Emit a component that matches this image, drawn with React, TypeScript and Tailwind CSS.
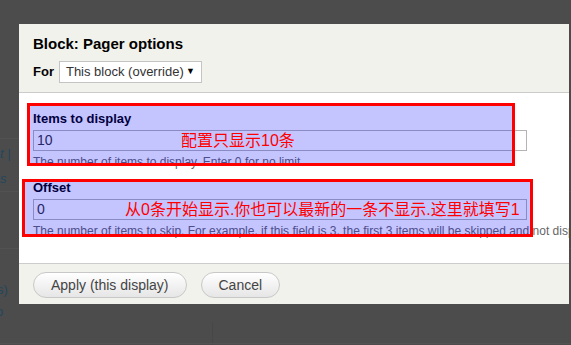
import React from 'react';

const cjk = "font-['Liberation_Sans','Noto_Sans_CJK_SC',sans-serif]";

interface FieldProps {
  label: string;
  value: string;
  note: string;
  hint: string;
  hintLeft: string;
  className?: string;
}

const Field: React.FC<FieldProps> = ({ label, value, note, hint, hintLeft, className }) => (
  <div className={className}>
    <div className="text-[13px] leading-[18px] font-bold text-black">{label}</div>
    <div className="relative mt-[2px]">
      <input
        readOnly
        value={value}
        className="block h-[21px] w-[494px] border border-[#b4b4b4] bg-white pl-[3px] text-[14px] text-[#333] outline-none"
      />
      {/* annotation */}
      <span
        className={`absolute inset-y-0 z-20 flex items-center text-[16px] leading-none text-[#ff0000] whitespace-nowrap ${cjk} ${hintLeft}`}
      >
        {hint}
      </span>
    </div>
    <div className="mt-[2px] text-[12px] leading-[18px] text-[#666] whitespace-nowrap">{note}</div>
  </div>
);

export default function App() {
  return (
    <div className="relative h-[345px] w-[571px] overflow-hidden bg-[#4c4c4c] font-['Liberation_Sans',Arial,sans-serif]">
      {/* page behind the modal */}
      <div className="text-[13px] text-[#24465c]">
        <div className="h-[139px] border-b border-[#525252]" />
        <div className="mt-[7px] leading-[16px] italic">t |</div>
        <div className="mt-[9px] leading-[16px] italic">s</div>
        <div className="mt-[4px] border-b border-[#525252]" />
        <div className="mt-[56px] border-b border-[#525252]" />
        <div className="ml-[-3px] mt-[33px] leading-[16px]">s)</div>
        <div className="ml-[-4px] mt-[6px] leading-[16px]">o</div>
        <div className="mt-[2px] flex h-[22px] border-b border-[#525252]">
          <div className="w-[213px] border-r border-[#474747]" />
        </div>
        <div className="flex">
          <div className="w-[213px] border-r border-[#474747] pl-[145px] pt-[5px]">
            <div className="flex h-[20px] w-[63px] items-center rounded-full border border-[#3e3e3e] text-[14px] text-[#1f3d55]">
              <span className="w-[44px] pl-[13px]">Add</span>
              <span className="flex h-full flex-1 items-center justify-center border-l border-[#3e3e3e] text-[8px]">▼</span>
            </div>
          </div>
        </div>
      </div>

      {/* modal */}
      <div className="absolute left-[19px] top-[24px] flex h-[280px] w-[550px] flex-col overflow-hidden bg-white">
        <div className="h-[69px] shrink-0 border-b border-[#cccccc] bg-[#f2f2ec] px-[14px] pt-[10px]">
          <h2 className="text-[15px] leading-[20px] font-bold text-black">Block: Pager options</h2>
          <div className="mt-[7px] flex items-center gap-[5px]">
            <span className="text-[13px] font-bold text-black">For</span>
            <div className="flex h-[22px] w-[143px] shrink-0 items-center justify-between whitespace-nowrap border border-[#c4c4c4] bg-white pl-[6px] pr-[6px] text-[13px] text-[#333]">
              <span>This block (override)</span>
              <span className="text-[9px] text-black">▼</span>
            </div>
          </div>
        </div>

        <div className="flex-1 px-[14px] pt-[17px]">
          <Field
            label="Items to display"
            value="10"
            note="The number of items to display. Enter 0 for no limit."
            hint="配置只显示10条"
            hintLeft="left-[148px]"
          />
          <Field
            className="mt-[8px]"
            label="Offset"
            value="0"
            note="The number of items to skip. For example, if this field is 3, the first 3 items will be skipped and not displayed."
            hint="从0条开始显示.你也可以最新的一条不显示.这里就填写1"
            hintLeft="left-[92px]"
          />
        </div>

        <div className="flex h-[41px] shrink-0 gap-[14px] border-t border-[#cccccc] bg-[#f2f2ec] px-[14px] pt-[8px]">
          <button className="h-[26px] rounded-full border border-[#c8c8c8] bg-gradient-to-b from-white to-[#e6e6e6] px-[17px] text-[14px] text-[#444]">
            Apply (this display)
          </button>
          <button className="h-[26px] rounded-full border border-[#c8c8c8] bg-gradient-to-b from-white to-[#e6e6e6] px-[17px] text-[14px] text-[#444]">
            Cancel
          </button>
        </div>

        {/* highlight boxes */}
        <div className="absolute left-[8px] top-[79px] z-10 h-[63px] w-[488px] border-[3px] border-[#ff0000] bg-[#0000ff]/[0.23]" />
        <div className="absolute left-[3px] top-[155px] z-10 h-[58px] w-[511px] border-[3px] border-[#ff0000] bg-[#0000ff]/[0.23]" />
      </div>
    </div>
  );
}
